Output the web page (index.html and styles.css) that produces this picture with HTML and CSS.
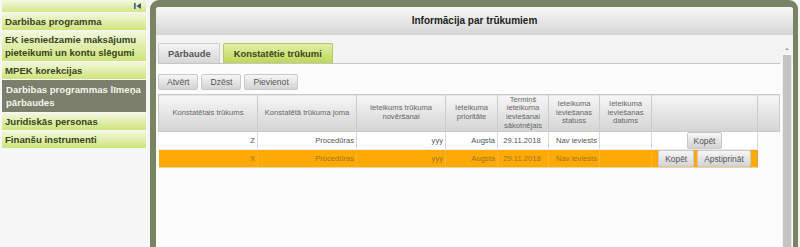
FILE: index.html
```html
<!DOCTYPE html>
<html lang="lv">
<head>
  <meta charset="UTF-8">
  <title>Informācija par trūkumiem</title>
  <link rel="stylesheet" href="styles.css">
</head>
<body>
  <div class="sidebar">
    <div class="side-head">
      <svg class="collapse" width="7" height="6" viewBox="0 0 7 6">
        <rect x="0" y="0" width="1.6" height="6" fill="#3e5d74"/>
        <polygon points="7,0 2.4,3 7,6" fill="#3e5d74"/>
      </svg>
    </div>
    <a class="menu-item" href="#">Darbibas programma</a>
    <a class="menu-item" href="#">EK iesniedzamie maksājumu pieteikumi un kontu slēgumi</a>
    <a class="menu-item" href="#">MPEK korekcijas</a>
    <a class="menu-item active" href="#">Darbibas programmas līmeņa pārbaudes</a>
    <a class="menu-item" href="#">Juridiskās personas</a>
    <a class="menu-item" href="#">Finanšu instrumenti</a>
  </div>

  <div class="panel">
    <div class="window">
      <div class="titlebar">Informācija par trūkumiem</div>
      <div class="window-body">
        <div class="content">
          <div class="tabs">
            <span class="tab">Pārbaude</span>
            <span class="tab active">Konstatētie trūkumi</span>
          </div>
          <div class="toolbar">
            <button class="btn">Atvērt</button>
            <button class="btn">Dzēst</button>
            <button class="btn">Pievienot</button>
          </div>

          <!-- Trūkumu tabula -->
          <table class="grid">
            <colgroup>
              <col style="width: 99px">
              <col style="width: 99px">
              <col style="width: 89px">
              <col style="width: 52px">
              <col style="width: 51px">
              <col style="width: 51px">
              <col style="width: 52px">
              <col style="width: 106px">
              <col style="width: 22px">
            </colgroup>
            <thead>
              <tr>
                <th>Konstatētais trūkums</th>
                <th>Konstatētā trūkuma joma</th>
                <th>Ieteikums trūkuma novēršanai</th>
                <th>Ieteikuma prioritāte</th>
                <th>Termiņš ieteikuma ieviešanai sākotnējais</th>
                <th>Ieteikuma ieviešanas statuss</th>
                <th>Ieteikuma ieviešanas datums</th>
                <th></th>
                <th></th>
              </tr>
            </thead>
            <tbody>
              <tr>
                <td>Z</td>
                <td>Procedūras</td>
                <td>yyy</td>
                <td>Augsta</td>
                <td class="center">29.11.2018</td>
                <td>Nav ieviests</td>
                <td></td>
                <td class="actions"><button class="btn small">Kopēt</button></td>
                <td class="filler"></td>
              </tr>
              <tr class="selected">
                <td>X</td>
                <td>Procedūras</td>
                <td>yyy</td>
                <td>Augsta</td>
                <td class="center">29.11.2018</td>
                <td>Nav ieviests</td>
                <td></td>
                <td class="actions"><button class="btn small">Kopēt</button><button class="btn small">Apstiprināt</button></td>
                <td class="filler"></td>
              </tr>
            </tbody>
          </table>
        </div>
        <div class="scrollbar">
          <span class="arrow-up"></span>
          <span class="track"></span>
        </div>
      </div>
    </div>
  </div>
</body>
</html>
```

FILE: styles.css
```css
body {
  margin: 0;
  padding: 0;
  display: flex;
  height: 247px;
  overflow: hidden;
  background-color: #f5f5f5;
  font-family: "Liberation Sans", Arial, sans-serif;
}

/* Kreisā izvēlne */
.sidebar {
  width: 144px;
  padding: 0 2px;
  background-color: #f7f7f7;
  display: flex;
  flex-direction: column;
  gap: 1px;
}

.side-head {
  height: 12px;
  background: linear-gradient(#f4f8e2, #d3e78a);
  display: flex;
  justify-content: flex-end;
  align-items: center;
  padding-right: 5px;
}

.menu-item {
  display: block;
  padding: 2px 3px;
  font-size: 9.6px;
  line-height: 13px;
  font-weight: bold;
  color: #38441c;
  text-decoration: none;
  background: linear-gradient(#f3f8de, #cde47a);
}

.menu-item.active {
  padding: 3px 4px;
  background: #7b7f6b;
  color: #f4f4ee;
}

/* Galvenais logs */
.panel {
  margin-left: 2px;
  width: 637px;
  padding: 7px 5px 0 6px;
  background-color: #788464;
  border-radius: 9px 9px 0 0;
}

.window {
  height: 240px;
  display: flex;
  flex-direction: column;
  background-color: #fcfcfc;
  border-radius: 3px 3px 0 0;
}

.titlebar {
  height: 28px;
  line-height: 28px;
  text-align: center;
  font-size: 10px;
  font-weight: bold;
  color: #222;
  background: linear-gradient(#f8f8f8, #d5d5d5);
  border-radius: 3px 3px 0 0;
}

.window-body {
  flex: 1;
  display: flex;
  background: linear-gradient(#f3f3f3 0, #f3f3f3 28px, #fcfcfc 28px);
}

.content {
  flex: 1;
  padding-left: 2px;
}

.tabs {
  display: flex;
  gap: 3px;
  padding-top: 8px;
  height: 20px;
  border-bottom: 1px solid #c6c6c6;
  margin-right: 1px;
}

.tab {
  padding: 0 8px 0 9px;
  line-height: 19px;
  font-size: 9.4px;
  font-weight: bold;
  color: #575757;
  background: linear-gradient(#f4f4f4, #d6d6d6);
  border: 1px solid #d0d0d0;
  border-bottom: none;
  border-radius: 2px 2px 0 0;
}

.tab.active {
  padding: 0 10px;
  color: #3b471f;
  background: linear-gradient(#e3f0a6, #bcd659);
  border-color: #b3c96b;
}

.toolbar {
  display: flex;
  gap: 3px;
  padding-top: 10px;
  margin-bottom: 4px;
}

.btn {
  height: 16px;
  padding: 0 8px;
  font-family: "Liberation Sans", Arial, sans-serif;
  font-size: 8.6px;
  color: #555;
  background: linear-gradient(#f6f6f6, #d3d3d3);
  border: 1px solid #c9c9c9;
  border-radius: 2px;
}

/* Tabula */
.grid {
  width: 621px;
  table-layout: fixed;
  border-collapse: collapse;
  font-size: 7.6px;
  color: #555;
}

.grid th {
  height: 36px;
  padding: 0 2px;
  font-weight: normal;
  line-height: 8.6px;
  color: #666;
  text-align: center;
  background: linear-gradient(#f6f6f6, #d4d4d4);
  border: 1px solid #cbcbcb;
}

.grid td {
  height: 17px;
  padding: 0 2px 0 0;
  text-align: right;
  background-color: #fff;
  border-right: 1px solid #d9d9d9;
  border-bottom: 1px solid #ececec;
  white-space: nowrap;
}

.grid td.center {
  text-align: center;
}

.grid td.actions {
  text-align: center;
  padding: 0;
}

.grid td.filler {
  background: none;
  border: none;
}

.grid .selected td {
  background-color: #fea906;
  color: #9a7624;
  border-right-color: #f5b43a;
  border-bottom-color: #f3d48f;
}

.grid .selected td.actions {
  border-right: 1px solid #d9a441;
}

.grid .selected td.filler {
  background: none;
  border: none;
}

.btn.small {
  height: 17px;
  padding: 0 6px;
  font-size: 8.4px;
  vertical-align: middle;
}

.selected .btn.small + .btn.small {
  margin-left: 3px;
}

/* Ritjosla */
.scrollbar {
  width: 11px;
  margin-right: 1px;
  display: flex;
  flex-direction: column;
  align-items: center;
}

.arrow-up {
  margin-top: 13px;
  width: 0;
  height: 0;
  border-left: 2px solid transparent;
  border-right: 2px solid transparent;
  border-bottom: 2px solid #999;
}

.track {
  margin-top: 5px;
  flex: 1;
  width: 8px;
  background-color: #c4c4c4;
  border-left: 1px solid #f0f0f0;
  border-right: 1px solid #e8e8e8;
}
```
